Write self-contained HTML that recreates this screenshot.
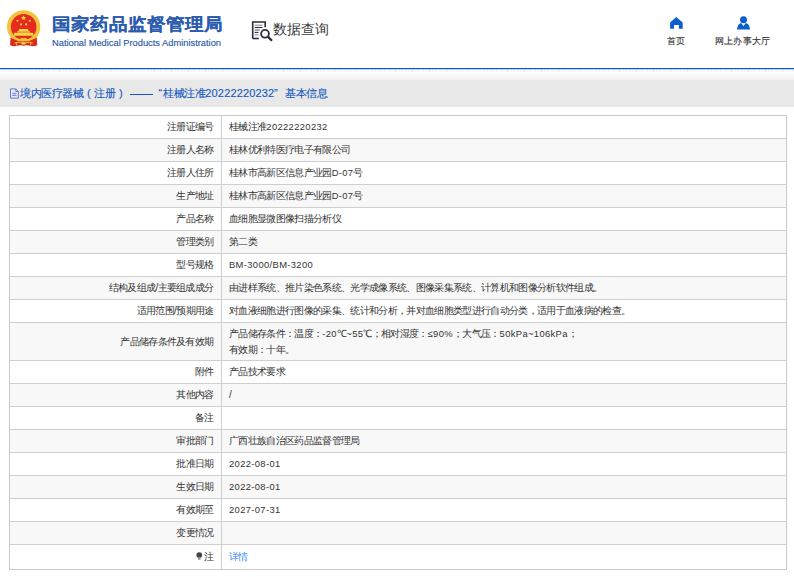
<!DOCTYPE html>
<html><head><meta charset="utf-8">
<style>
html,body{margin:0;padding:0;}
body{width:794px;height:577px;overflow:hidden;background:#fff;position:relative;font-family:"Liberation Sans",sans-serif;color:#333;}
.abs{position:absolute;white-space:nowrap;}
#title-cn{left:52px;top:13px;font-size:19px;font-weight:bold;color:#2b5cae;line-height:24px;-webkit-text-stroke:0.1px #2b5cae;transform:scaleY(0.92);transform-origin:50% 35%;}
#title-en{left:52px;top:37px;font-size:9.3px;color:#2c5aa8;-webkit-text-stroke:0.15px #2c5aa8;line-height:12px;}
#dq{left:273px;top:19px;font-size:14.2px;color:#3a3a3a;line-height:20px;}
.nav{font-size:9px;letter-spacing:0.2px;color:#333;-webkit-text-stroke:0.1px #333;line-height:12px;}
#blue{left:0;top:68px;width:794px;height:2px;background:linear-gradient(#0a5cc2 0,#0a5cc2 50%,#bcd2ef 50%,#bcd2ef 100%);}
#dash{left:0;top:70px;width:794px;height:2px;background-image:repeating-linear-gradient(135deg,transparent 0,transparent 1.6px,#d8d8d8 1.6px,#d8d8d8 2.4px);opacity:.5}
#grad{left:0;top:73px;width:794px;height:7px;background:linear-gradient(#fdfdfd,#f0f0f0);}
#band{left:0;top:80px;width:794px;height:27px;background:#e8e8e8;}
.sec{top:87px;font-size:11px;letter-spacing:-0.42px;color:#1458c0;line-height:13px;-webkit-text-stroke:0.12px #1458c0;}
#tbl{left:9px;top:115px;width:776px;border:1px solid #cacaca;}
.r{height:22px;border-top:1px solid #cfcfcf;position:relative;font-size:10px;letter-spacing:-0.67px;line-height:22px;}
.r:first-child{border-top:none;}
.r.g{background:#f8f8f8;}
.r .l{position:absolute;left:0;width:203.5px;text-align:right;top:0;}
.r .v{position:absolute;left:219px;top:0;}
.r .d{position:absolute;left:211px;top:0;bottom:0;width:1px;background:#cfcfcf;}
.r2{height:37px;}
.r2 .l{line-height:37px;}
.r2 .v{line-height:16px;top:3px;}
.n{font-size:9.4px;letter-spacing:0.36px;}
.tn{letter-spacing:0.15px;}
.last{height:24px;line-height:24px;}
.last .l,.last .v{line-height:24px;}
a{color:#2f86ee;text-decoration:none;}
</style></head>
<body>
<!-- emblem -->
<svg class="abs" style="left:0;top:0" width="50" height="52" viewBox="0 0 50 52">
  <circle cx="23.65" cy="26.9" r="16.7" fill="#f3c43a"/>
  <circle cx="23.65" cy="26.9" r="12.8" fill="#e52a20"/>
  <path d="M23.5 15.2 l0.75 1.9 2.05 .05 -1.6 1.25 .6 1.95 -1.8-1.15 -1.75 1.15 .6-1.95 -1.6-1.25 2.05-.05z" fill="#f8d448"/>
  <circle cx="17.5" cy="20.7" r="1.05" fill="#f8d448"/><circle cx="29.8" cy="20.7" r="1.05" fill="#f8d448"/>
  <circle cx="21.1" cy="24.4" r="1.05" fill="#f8d448"/><circle cx="26.2" cy="24.4" r="1.05" fill="#f8d448"/>
  <path d="M18.5 30.9 L19.3 29.1 H27.9 L28.7 30.9 Z" fill="#f8d448"/>
  <rect x="17.3" y="31.2" width="12.7" height="1.4" fill="#f6cd42"/>
  <path d="M14.2 32.8 H33.1 L33.6 35.8 H13.7 Z" fill="#f8d448"/>
  <path d="M10.5 37.5 Q23.6 44.5 36.8 37.5 L37.2 45.3 Q33 46.8 29 45.6 Q26 44.6 23.6 45.8 Q21.2 44.6 18.2 45.6 Q14.2 46.8 10.1 45.3 Z" fill="#dc2a1f"/>
  <path d="M11.5 37.2 Q23.6 44 35.8 37.2" fill="none" stroke="#f3c43a" stroke-width="1.8"/>
  <path d="M14.5 43.2 Q18.5 41.5 21.5 42.8 M25.7 42.8 Q28.7 41.5 32.7 43.2" fill="none" stroke="#f3c43a" stroke-width="1.1"/>
  <path d="M19.6 39.6 Q21.5 36.8 23.6 38.3 Q25.7 36.8 27.6 39.6 Q23.6 41.6 19.6 39.6Z" fill="#f3c43a"/>
  <ellipse cx="23.5" cy="43.3" rx="2.4" ry="1.4" fill="#f6cd42"/>
  <path d="M16.6 43.2 V45.6 M30.6 43.2 V45.6" stroke="#f3c43a" stroke-width="0.9"/>
</svg>
<div class="abs" id="title-cn">国家药品监督管理局</div>
<div class="abs" id="title-en">National Medical Products Administration</div>
<!-- data query icon -->
<svg class="abs" style="left:250px;top:19px" width="26" height="25" viewBox="0 0 26 25">
  <path d="M2.7 19.5 V3 H15.2 V8.2" fill="none" stroke="#2b2b3b" stroke-width="1.6"/>
  <path d="M2.7 19.5 H8.8" fill="none" stroke="#2b2b3b" stroke-width="1.6"/>
  <path d="M4.6 6.2 H12.5" stroke="#8a8a96" stroke-width="1.1"/>
  <path d="M4.6 8.5 H12.5" stroke="#2b2b3b" stroke-width="1.1"/>
  <path d="M4.6 11 H9.8" stroke="#5a5a66" stroke-width="1.1"/>
  <path d="M4.6 13.4 H8.5" stroke="#2b2b3b" stroke-width="1.1"/>
  <path d="M4.6 15.9 H8.5" stroke="#8a8a96" stroke-width="1.1"/>
  <circle cx="15" cy="14.8" r="3.9" fill="none" stroke="#2b2b3b" stroke-width="1.8"/>
  <path d="M17.8 17.6 L22 21.8" stroke="#2b2b3b" stroke-width="2.3"/>
</svg>
<div class="abs" id="dq">数据查询</div>
<!-- nav -->
<svg class="abs" style="left:669px;top:16px" width="15" height="14" viewBox="0 0 15 14">
  <path d="M7.3 1 L13.7 6.5 V12.7 H9.9 V8.9 H5 V12.7 H1.1 V6.5 Z" fill="#0a5fcc"/>
</svg>
<div class="abs nav" style="left:667px;top:35px">首页</div>
<svg class="abs" style="left:736px;top:15px" width="15" height="15" viewBox="0 0 15 15">
  <circle cx="7.5" cy="4.7" r="3.5" fill="#0a5fcc"/>
  <path d="M1 14.6 Q1.5 9 5.2 8.1 L7.5 10.9 L9.8 8.1 Q13.5 9 14 14.6 Z" fill="#0a5fcc"/>
</svg>
<div class="abs nav" style="left:715px;top:35px">网上办事大厅</div>

<div class="abs" id="blue"></div>
<div class="abs" id="dash"></div>
<div class="abs" id="grad"></div>
<div class="abs" id="band"></div>
<svg class="abs" style="left:9px;top:88px" width="11" height="11" viewBox="0 0 11 11">
  <path d="M1.5 0.9 H6.8 L9.4 3.5 V10.1 H1.5 Z" fill="none" stroke="#4d64d6" stroke-width="0.85"/>
  <path d="M6.8 0.9 V3.5 H9.4" fill="none" stroke="#4d64d6" stroke-width="0.8"/>
  <path d="M3.3 5.4 H7.6 M3.3 7.4 H7.6" stroke="#4d64d6" stroke-width="0.8"/>
</svg>
<div class="abs sec" style="left:20px">境内医疗器械</div>
<div class="abs sec" style="left:87px;letter-spacing:0">(</div>
<div class="abs sec" style="left:94px">注册</div>
<div class="abs sec" style="left:119px;letter-spacing:0">)</div>
<div class="abs" style="left:129.5px;top:93.5px;width:23.8px;height:1.5px;background:#1458c0"></div>
<div class="abs sec" style="left:158.5px;letter-spacing:0">&ldquo;</div>
<div class="abs sec" style="left:163px">桂械注准<span class="tn">20222220232</span></div>
<div class="abs sec" style="left:274px;letter-spacing:0">&rdquo;</div>
<div class="abs sec" style="left:285px">基本信息</div>

<div class="abs" id="tbl">
 <div class="r"><div class="l">注册证编号</div><div class="d"></div><div class="v">桂械注准<span class="n">20222220232</span></div></div>
 <div class="r g"><div class="l">注册人名称</div><div class="d"></div><div class="v">桂林优利特医疗电子有限公司</div></div>
 <div class="r"><div class="l">注册人住所</div><div class="d"></div><div class="v">桂林市高新区信息产业园<span class="n">D-07</span>号</div></div>
 <div class="r g"><div class="l">生产地址</div><div class="d"></div><div class="v">桂林市高新区信息产业园<span class="n">D-07</span>号</div></div>
 <div class="r"><div class="l">产品名称</div><div class="d"></div><div class="v">血细胞显微图像扫描分析仪</div></div>
 <div class="r g"><div class="l">管理类别</div><div class="d"></div><div class="v">第二类</div></div>
 <div class="r"><div class="l">型号规格</div><div class="d"></div><div class="v"><span class="n">BM-3000/BM-3200</span></div></div>
 <div class="r g"><div class="l">结构及组成/主要组成成分</div><div class="d"></div><div class="v">由进样系统、推片染色系统、光学成像系统、图像采集系统、计算机和图像分析软件组成。</div></div>
 <div class="r"><div class="l">适用范围/预期用途</div><div class="d"></div><div class="v">对血液细胞进行图像的采集、统计和分析，并对血细胞类型进行自动分类，适用于血液病的检查。</div></div>
 <div class="r g r2"><div class="l">产品储存条件及有效期</div><div class="d"></div><div class="v">产品储存条件：温度：<span class="n">-20</span>℃<span class="n">~55</span>℃；相对湿度：<span class="n">≤90%</span>；大气压：<span class="n">50kPa~106kPa</span>；<br>有效期：十年。</div></div>
 <div class="r"><div class="l">附件</div><div class="d"></div><div class="v">产品技术要求</div></div>
 <div class="r g"><div class="l">其他内容</div><div class="d"></div><div class="v">/</div></div>
 <div class="r"><div class="l">备注</div><div class="d"></div><div class="v"></div></div>
 <div class="r g"><div class="l">审批部门</div><div class="d"></div><div class="v">广西壮族自治区药品监督管理局</div></div>
 <div class="r"><div class="l">批准日期</div><div class="d"></div><div class="v"><span class="n">2022-08-01</span></div></div>
 <div class="r g"><div class="l">生效日期</div><div class="d"></div><div class="v"><span class="n">2022-08-01</span></div></div>
 <div class="r"><div class="l">有效期至</div><div class="d"></div><div class="v"><span class="n">2027-07-31</span></div></div>
 <div class="r g"><div class="l">变更情况</div><div class="d"></div><div class="v"></div></div>
 <div class="r last"><div class="l"><svg width="7" height="9" viewBox="0 0 7 9" style="vertical-align:-1px;margin-right:1px"><circle cx="3.3" cy="3.1" r="2.9" fill="#444"/><path d="M2.1 5.2 H4.5 V7.9 H2.1Z" fill="#9a9a9a"/></svg>注</div><div class="d"></div><div class="v"><a>详情</a></div></div>
</div>
</body></html>
